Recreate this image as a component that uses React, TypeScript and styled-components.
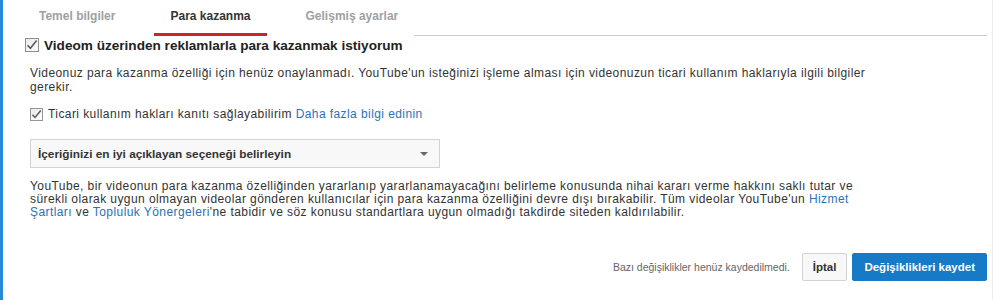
import React from 'react';
import styled, {createGlobalStyle} from "styled-components";

const GlobalStyle = createGlobalStyle`
  body {
    margin: 0;
    background: #ffffff;
    font-family: "Liberation Sans", Arial, sans-serif;
  }
`

type TabType = {
    title: string
    active?: boolean
}

const tabs: TabType[] = [
    {title: 'Temel bilgiler'},
    {title: 'Para kazanma', active: true},
    {title: 'Gelişmiş ayarlar'},
]

const CheckIcon = (props: { size: number }) => (
    <svg width={props.size} height={props.size} viewBox="0 0 14 14">
        <defs>
            <linearGradient id={'cb' + props.size} x1="0" y1="0" x2="1" y2="1">
                <stop offset="0" stopColor="#e9e9e9"/>
                <stop offset="1" stopColor="#ffffff"/>
            </linearGradient>
        </defs>
        <rect x="0.5" y="0.5" width="13" height="13" fill={'url(#cb' + props.size + ')'} stroke="#8f8f8f"/>
        <path d="M2.6 7.2 L5.4 10.2 L11.6 2.6" fill="none" stroke="#5a5a5a" strokeWidth="1.6"/>
    </svg>
)

export default function App() {
    return (
        <Page>
            <GlobalStyle/>
            <TabBar>
                {tabs.map(t => <Tab key={t.title} active={t.active}>{t.title}</Tab>)}
                <TabLine/>
            </TabBar>

            <Heading>
                <CheckIcon size={14}/>
                <span>Videom üzerinden reklamlarla para kazanmak istiyorum</span>
            </Heading>

            <Content>
                <Paragraph lineHeight={14}>
                    Videonuz para kazanma özelliği için henüz onaylanmadı. YouTube'un isteğinizi işleme alması için
                    videonuzun ticari kullanım haklarıyla ilgili bilgiler<br/>gerekir.
                </Paragraph>

                <CheckRow>
                    <CheckIcon size={13}/>
                    <span>Ticari kullanım hakları kanıtı sağlayabilirim <Link>Daha fazla bilgi edinin</Link></span>
                </CheckRow>

                <Select>
                    <span>İçeriğinizi en iyi açıklayan seçeneği belirleyin</span>
                    <Arrow/>
                </Select>

                <Paragraph lineHeight={13}>
                    YouTube, bir videonun para kazanma özelliğinden yararlanıp yararlanamayacağını belirleme konusunda
                    nihai kararı verme hakkını saklı tutar ve<br/>sürekli olarak uygun olmayan videolar gönderen
                    kullanıcılar için para kazanma özelliğini devre dışı bırakabilir. Tüm videolar YouTube'un <Link>Hizmet</Link><br/>
                    <Link>Şartları</Link> ve <Link>Topluluk Yönergeleri</Link>'ne tabidir ve söz konusu standartlara
                    uygun olmadığı takdirde siteden kaldırılabilir.
                </Paragraph>
            </Content>

            <Footer>
                <Notice>Bazı değişiklikler henüz kaydedilmedi.</Notice>
                <Button>İptal</Button>
                <Button primary>Değişiklikleri kaydet</Button>
            </Footer>
        </Page>
    );
}

const Page = styled.div`
  box-sizing: border-box;
  height: 300px;
  border-left: 3px solid #238ad9;
  border-right: 1px solid #ececec;
  display: flex;
  flex-direction: column;
`

const TabBar = styled.div`
  display: flex;
  align-items: stretch;
  height: 36px;
  padding-left: 20px;
  padding-right: 5px;
  gap: 23px;
`

const Tab = styled.div<{ active?: boolean }>`
  box-sizing: border-box;
  display: flex;
  align-items: center;
  padding: 0 16px 2px;
  font-size: 12px;
  font-weight: bold;
  color: ${props => props.active ? '#333333' : '#a0a0a0'};
  border-bottom: 3px solid ${props => props.active ? '#c8242b' : 'transparent'};
`

const TabLine = styled.div`
  flex: 1;
  margin-left: -23px;
  border-bottom: 1px solid #cccccc;
`

const Heading = styled.div`
  display: flex;
  align-items: center;
  gap: 5px;
  height: 18px;
  padding-left: 22px;
  font-size: 13.6px;
  font-weight: bold;
  color: #222222;
`

const Content = styled.div`
  padding-left: 27px;
  color: #333333;
  font-size: 12px;
  letter-spacing: 0.42px;
`

const Paragraph = styled.p<{ lineHeight: number }>`
  margin: 12px 0 0;
  line-height: ${props => props.lineHeight}px;
  white-space: nowrap;
`

const CheckRow = styled.div`
  display: flex;
  align-items: center;
  gap: 5px;
  height: 16px;
  margin-top: 12px;
`

const Link = styled.span`
  color: #2b72b5;
`

const Select = styled.div`
  box-sizing: border-box;
  display: flex;
  align-items: center;
  justify-content: space-between;
  width: 410px;
  height: 29px;
  margin-top: 17px;
  padding: 0 11px 0 7px;
  border: 1px solid #d3d3d3;
  background: #f8f8f8;
  font-size: 11.8px;
  font-weight: bold;
  letter-spacing: 0;
  color: #333333;
`

const Arrow = styled.div`
  width: 0;
  height: 0;
  border-left: 4px solid transparent;
  border-right: 4px solid transparent;
  border-top: 4px solid #666666;
`

const Footer = styled.div`
  display: flex;
  align-items: center;
  justify-content: flex-end;
  gap: 5px;
  margin-top: 34px;
  padding-right: 5px;
`

const Notice = styled.span`
  font-size: 10.5px;
  color: #666666;
  margin-right: 7px;
`

const Button = styled.button<{ primary?: boolean }>`
  box-sizing: border-box;
  height: 28px;
  margin: 0;
  padding: 0 ${props => props.primary ? '11px' : '10px'};
  border-radius: 2px;
  border: 1px solid ${props => props.primary ? '#167ac6' : '#d3d3d3'};
  background: ${props => props.primary ? '#167ac6' : '#f8f8f8'};
  color: ${props => props.primary ? '#ffffff' : '#333333'};
  font-family: "Liberation Sans", Arial, sans-serif;
  font-size: 11.5px;
  font-weight: bold;
`
